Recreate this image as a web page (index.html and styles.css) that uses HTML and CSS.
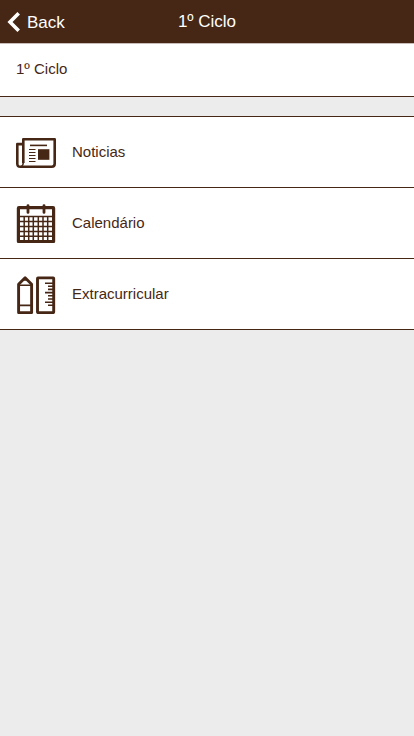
FILE: index.html
```
<!DOCTYPE html>
<html lang="pt">
<head>
<meta charset="utf-8">
<title>1º Ciclo</title>
<link rel="stylesheet" href="styles.css">
</head>
<body>
<header class="bar">
  <a class="back"><svg class="chevron" width="14" height="22" viewBox="0 0 14 22"><path d="M11.7 2.2 3 11l8.7 8.8"/></svg><span>Back</span></a>
  <h1 class="title">1º Ciclo</h1>
</header>
<section class="intro">1º Ciclo</section>
<nav class="menu">
  <a class="item">
    <svg class="icon" width="40" height="40" viewBox="0 0 40 40">
      <path class="line" d="M7.3 31V7.2h31.4v24.6q0 3-3 3H4.3q-3 0-3-3V12.1h6"/>
      <path class="line thin" d="M7.3 30.5q0 3-2 4"/>
      <path class="line thin" d="M14 13.4h17"/>
      <path class="line rule" d="M13 17.5h6.5M13 20.5h6.5M13 23.5h6.5M13 26.5h6.5M13 29.5h6.5"/>
      <path class="fill" d="M22 17.2h11.4v10.6H22z"/>
    </svg>
    <span>Noticias</span>
  </a>
  <a class="item">
    <svg class="icon" width="40" height="40" viewBox="0 0 40 40">
      <rect class="line heavy" x="2.4" y="4.7" width="35.2" height="34" rx=".5"/>
      <path class="line ring" d="M12 2.6v6.8M28 2.6v6.8"/>
      <path class="line grid" d="M3 13.5h34M3 18.4h34M3 23.4h34M3 28.4h34M3 33.2h34M8.2 13.5v25M12.7 13.5v25M17.3 13.5v25M22.3 13.5v25M27 13.5v25M31.7 13.5v25"/>
    </svg>
    <span>Calendário</span>
  </a>
  <a class="item">
    <svg class="icon" width="40" height="40" viewBox="0 0 40 40">
      <path class="line body" d="M2.6 38.6V10.2L9.1 3.8l6.5 6.4v28.4z"/>
      <path class="fill" d="M6 6.8 9.1 3.5l3.2 3.3z"/>
      <path class="line thin" d="M3 11.2h12.5M3 31.4h12.5"/>
      <rect class="line body" x="21.5" y="3.9" width="16.2" height="34.7" rx=".5"/>
      <path class="line thin" d="M29 9.2h8M32 12.3h5M32 15.4h5M29 18.6h8M32 21.8h5M32 25h5M29 28.2h8M32 31.2h5"/>
    </svg>
    <span>Extracurricular</span>
  </a>
</nav>
</body>
</html>
```

FILE: styles.css
```
* {
  box-sizing: border-box;
}

body {
  margin: 0;
  min-height: 100vh;
  background: #ececec;
  color: #462715;
  font: 15px/20px "Liberation Sans", Arial, sans-serif;
}

.bar {
  display: grid;
  grid-template-columns: 1fr auto 1fr;
  align-items: center;
  height: 44px;
  background: #462715;
  border-bottom: 1px solid #c8bdb8;
  color: #fff;
  font-size: 17px;
}

.back {
  display: flex;
  align-items: center;
  gap: 6px;
  padding-left: 7px;
}

.back span {
  padding-top: 2px;
}

.chevron {
  fill: none;
  stroke: #fff;
  stroke-width: 3.6;
}

.title {
  margin: 0;
  font-size: 17px;
  font-weight: 400;
}

.intro {
  height: 53px;
  padding: 15px 16px;
  background: #fff;
  border-bottom: 1px solid #462715;
}

.menu {
  margin-top: 19px;
  border-top: 1px solid #462715;
}

.item {
  display: flex;
  align-items: center;
  gap: 16px;
  height: 71px;
  padding: 0 16px;
  background: #fff;
  border-bottom: 1px solid #462715;
}

.icon {
  flex: none;
}

.line {
  fill: none;
  stroke: #462715;
  stroke-width: 2.6;
  stroke-linejoin: round;
}

.thin {
  stroke-width: 1.6;
}

.rule {
  stroke-width: 1.1;
}

.heavy {
  stroke-width: 3.2;
}

.body {
  stroke-width: 2.9;
}

.ring {
  stroke-width: 2.8;
  stroke-linecap: round;
}

.grid {
  stroke-width: 1.5;
}

.fill {
  fill: #462715;
}
```
